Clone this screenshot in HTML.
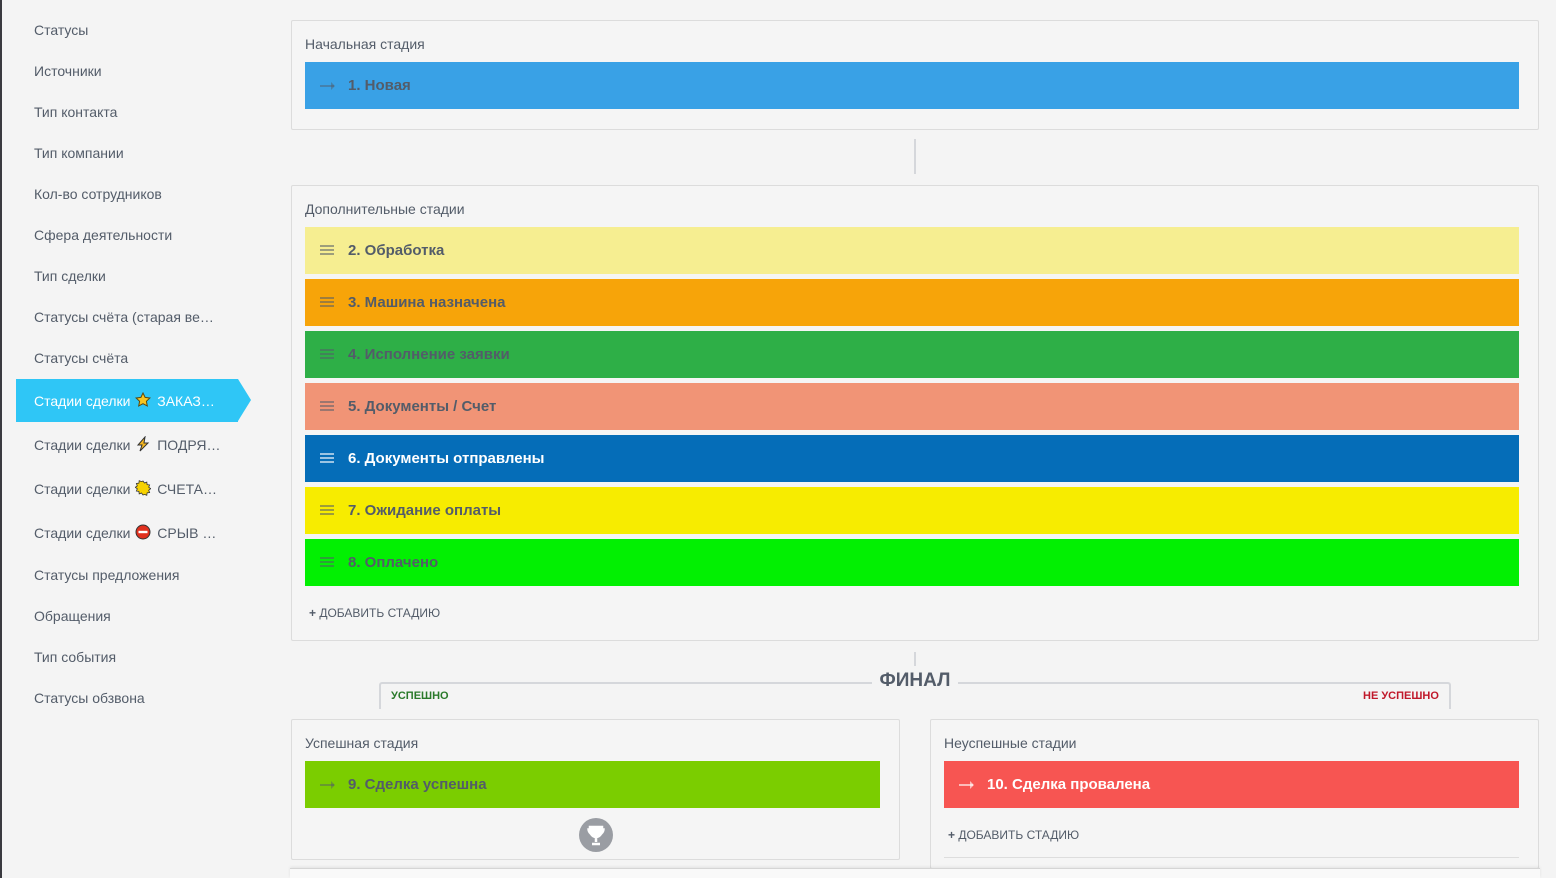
<!DOCTYPE html>
<html><head><meta charset="utf-8"><style>
*{margin:0;padding:0;box-sizing:border-box}
body{width:1556px;height:878px;overflow:hidden;background:#f4f4f4;font-family:"Liberation Sans",Arial,sans-serif;position:relative;color:#535c69}
.a{position:absolute}
.side{font-size:14px;color:#535c69;left:34px;white-space:nowrap;line-height:16px}
.side svg{vertical-align:-2px;margin:0 2px 0 1px}
.active{left:16px;top:379px;width:222px;height:43px;background:#2fc6f6}
.active:after{content:"";position:absolute;right:-13px;top:0;border-left:13px solid #2fc6f6;border-top:21.5px solid transparent;border-bottom:21.5px solid transparent}
.box{border:1px solid #dcdcdc;background:#f5f5f5;border-radius:2px}
.lbl{font-size:14px;color:#535c69}
.bar{left:305px;width:1214px;height:47px}
.bar span,.sp{position:absolute;left:43px;top:15px;font-size:15px;font-weight:bold;color:#535c69;white-space:nowrap}
.ham{position:absolute;left:15px;top:18px;width:14px;height:10px;border-top:2px solid rgba(83,92,105,.55);border-bottom:2px solid rgba(83,92,105,.55)}
.ham:after{content:"";position:absolute;left:0;right:0;top:2px;height:2px;background:rgba(83,92,105,.55)}
.w.ham{border-color:rgba(255,255,255,.6)}
.w.ham:after{background:rgba(255,255,255,.6)}
.arr{position:absolute;left:15px;top:23px;width:14px;height:2px;background:rgba(83,92,105,.45)}
.arr:after{content:"";position:absolute;right:-1px;top:-3px;border-left:4px solid rgba(83,92,105,.45);border-top:4px solid transparent;border-bottom:4px solid transparent}
.arr.wa{background:rgba(255,255,255,.6)}
.arr.wa:after{border-left-color:rgba(255,255,255,.6)}
.add{font-size:12px;color:#535c69}
.vl{width:2px;background:#d5d7db}
</style></head><body>
<div class="a" style="left:0;top:0;width:2px;height:878px;background:#3a3a40"></div>
<div class="a side" style="top:22px">Статусы</div>
<div class="a side" style="top:63px">Источники</div>
<div class="a side" style="top:104px">Тип контакта</div>
<div class="a side" style="top:145px">Тип компании</div>
<div class="a side" style="top:186px">Кол-во сотрудников</div>
<div class="a side" style="top:227px">Сфера деятельности</div>
<div class="a side" style="top:268px">Тип сделки</div>
<div class="a side" style="top:309px">Статусы счёта (старая ве…</div>
<div class="a side" style="top:350px">Статусы счёта</div>
<div class="a active"></div>
<div class="a side" style="top:392px;color:#fff">Стадии сделки <svg width="16" height="16" viewBox="0 0 16 16"><path d="M8 1l2.1 4.4 4.8.6-3.5 3.3.9 4.7L8 11.7 3.7 14l.9-4.7L1.1 6l4.8-.6z" fill="#f7c520" stroke="#5a4a10" stroke-width="1"/></svg> ЗАКАЗ…</div>
<div class="a side" style="top:436px">Стадии сделки <svg width="16" height="16" viewBox="0 0 16 16"><path d="M10 1L3 9h4l-2 6 8-8H9z" fill="#f7b820" stroke="#333" stroke-width="1"/></svg> ПОДРЯ…</div>
<div class="a side" style="top:480px">Стадии сделки <svg width="16" height="16" viewBox="0 0 16 16"><path d="M8 1l1.5 2 2.3-.9.3 2.5 2.5.3-.9 2.3 2 1.5-2 1.5.9 2.3-2.5.3-.3 2.5-2.3-.9L8 15l-1.5-2-2.3.9-.3-2.5-2.5-.3.9-2.3-2-1.5 2-1.5-.9-2.3 2.5-.3.3-2.5 2.3.9z" fill="#f7d200" stroke="#333" stroke-width=".8"/></svg> СЧЕТА…</div>
<div class="a side" style="top:524px">Стадии сделки <svg width="16" height="16" viewBox="0 0 16 16"><circle cx="8" cy="8" r="7" fill="#e0301e" stroke="#333" stroke-width="1"/><rect x="3.5" y="6.8" width="9" height="2.4" fill="#fff"/></svg> СРЫВ …</div>
<div class="a side" style="top:567px">Статусы предложения</div>
<div class="a side" style="top:608px">Обращения</div>
<div class="a side" style="top:649px">Тип события</div>
<div class="a side" style="top:690px">Статусы обзвона</div>

<div class="a box" style="left:291px;top:20px;width:1248px;height:110px"></div>
<div class="a lbl" style="left:305px;top:36px">Начальная стадия</div>
<div class="a bar" style="top:62px;background:#39a1e6"><i class="arr"></i><span>1. Новая</span></div>
<div class="a vl" style="left:914px;top:139px;height:35px"></div>

<div class="a box" style="left:291px;top:185px;width:1248px;height:456px"></div>
<div class="a lbl" style="left:305px;top:201px">Дополнительные стадии</div>
<div class="a bar" style="top:227px;background:#f6ee91"><i class="ham"></i><span>2. Обработка</span></div>
<div class="a bar" style="top:279px;background:#f7a409"><i class="ham"></i><span>3. Машина назначена</span></div>
<div class="a bar" style="top:331px;background:#2eaf47"><i class="ham"></i><span>4. Исполнение заявки</span></div>
<div class="a bar" style="top:383px;background:#f19476"><i class="ham"></i><span>5. Документы / Счет</span></div>
<div class="a bar" style="top:435px;background:#056db8"><i class="ham w"></i><span style="color:#fff">6. Документы отправлены</span></div>
<div class="a bar" style="top:487px;background:#f7ec00"><i class="ham"></i><span>7. Ожидание оплаты</span></div>
<div class="a bar" style="top:539px;background:#02f002"><i class="ham"></i><span>8. Оплачено</span></div>
<div class="a add" style="left:309px;top:606px"><b>+</b> ДОБАВИТЬ СТАДИЮ</div>

<div class="a vl" style="left:914px;top:652px;height:14px"></div>
<div class="a" style="left:379px;top:682px;width:1072px;height:27px;border:2px solid #d5d7db;border-bottom:none;border-radius:3px 3px 0 0"></div>
<div class="a" style="left:872px;top:670px;width:86px;height:24px;background:#f4f4f4;text-align:center;font-size:19px;font-weight:bold;color:#535c69">ФИНАЛ</div>
<div class="a" style="left:391px;top:690px;font-size:11px;font-weight:bold;color:#2a7a2a">УСПЕШНО</div>
<div class="a" style="left:1363px;top:690px;font-size:11px;font-weight:bold;color:#c0182a">НЕ УСПЕШНО</div>

<div class="a box" style="left:291px;top:719px;width:609px;height:141px"></div>
<div class="a lbl" style="left:305px;top:735px">Успешная стадия</div>
<div class="a" style="left:305px;top:761px;width:575px;height:47px;background:#7bcd00"><i class="arr"></i><span class="sp">9. Сделка успешна</span></div>
<div class="a" style="left:579px;top:818px;width:34px;height:34px;border-radius:50%;background:#9a9da3">
<svg width="34" height="34" viewBox="0 0 34 34"><path d="M11 9h12v3c0 4-3 7-6 7s-6-3-6-7z M17 19v5 M13 26h8" stroke="#fff" stroke-width="2.5" fill="#fff"/><path d="M11 11h-2c0 3 2 5 3 5 M23 11h2c0 3-2 5-3 5" stroke="#fff" stroke-width="1.5" fill="none"/></svg></div>

<div class="a box" style="left:930px;top:719px;width:609px;height:150px"></div>
<div class="a lbl" style="left:944px;top:735px">Неуспешные стадии</div>
<div class="a" style="left:944px;top:761px;width:575px;height:47px;background:#f75552"><i class="arr wa"></i><span class="sp" style="color:#fff">10. Сделка провалена</span></div>
<div class="a add" style="left:948px;top:828px"><b>+</b> ДОБАВИТЬ СТАДИЮ</div>
<div class="a" style="left:944px;top:857px;width:575px;height:1px;background:#ddd"></div>
<div class="a" style="left:290px;top:868px;width:1250px;height:10px;background:#f9f9f9;border-top:1px solid #d5d5d5;box-shadow:0 -1px 3px rgba(0,0,0,.08)"></div>
</body></html>
